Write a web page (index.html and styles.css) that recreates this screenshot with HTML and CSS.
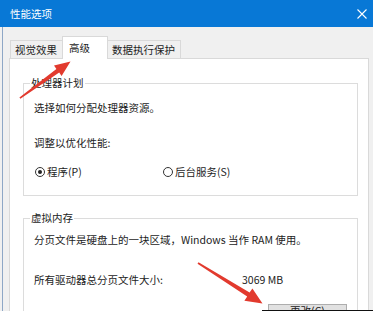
FILE: index.html
```html
<!DOCTYPE html>
<html lang="zh-CN">
<head>
<meta charset="utf-8">
<title>性能选项</title>
<link rel="stylesheet" href="styles.css">
</head>
<body>
<div class="win">
  <div class="titlebar">
    <span class="title">性能选项</span>
    <svg class="close" width="10" height="10" viewBox="0 0 10 10"><path d="M0.5 0.5 L9.5 9.5 M9.5 0.5 L0.5 9.5" stroke="#fff" stroke-width="1.1" fill="none"/></svg>
  </div>
  <div class="client">
    <div class="tabs">
      <div class="tab t1">视觉效果</div>
      <div class="tab t2 active">高级</div>
      <div class="tab t3">数据执行保护</div>
    </div>
    <div class="panel">
      <fieldset class="group g1">
        <legend>处理器计划</legend>
        <p class="line l1">选择如何分配处理器资源。</p>
        <p class="line l2">调整以优化性能:</p>
        <div class="radios">
          <label class="radio"><span class="dot checked"></span>程序(P)</label>
          <label class="radio"><span class="dot"></span>后台服务(S)</label>
        </div>
      </fieldset>
      <fieldset class="group g2">
        <legend>虚拟内存</legend>
        <p class="line">分页文件是硬盘上的一块区域，Windows 当作 RAM 使用。</p>
        <div class="sizerow"><span>所有驱动器总分页文件大小:</span><span>3069 MB</span></div>
        <div class="btnrow"><button class="btn">更改(C)</button></div>
      </fieldset>
    </div>
  </div>
  <svg class="arrows" width="373" height="311" viewBox="0 0 373 311">
    <polygon fill="#e23a2e" points="20.4,98.8 59.2,72.6 61.6,76 70.5,61.5 54,65.6 56.4,69 19.4,97.4"/>
    <polygon fill="#e23a2e" points="198.5,262.2 249.6,292.4 252.4,288.4 262.5,303.5 244.4,300.8 247.2,296.6 197.5,263.8"/>
  </svg>
  <div class="edge"></div>
</div>
</body>
</html>
```

FILE: styles.css
```css
html, body {
  margin: 0;
  padding: 0;
  background: #f0f0f0;
}

body {
  width: 373px;
  height: 311px;
  overflow: hidden;
  font-family: "Noto Sans CJK SC", "Noto Sans", sans-serif;
  font-size: 10.5px;
  line-height: 14px;
  color: #1c1c1c;
}

.win {
  position: relative;
  width: 373px;
  height: 311px;
  display: flex;
  flex-direction: column;
}

.titlebar {
  height: 27px;
  flex: none;
  background: #0878d6;
  display: flex;
  align-items: center;
  justify-content: space-between;
  padding: 0 6px 0 10px;
  color: #fff;
}

.title {
  margin-top: 1px;
}

.close {
  display: block;
  margin-top: 1px;
}

.client {
  flex: 1;
  margin-left: 2px;
  border-left: 1px solid #8ea7c6;
  padding: 9px 4px 0 6px;
}

.tabs {
  display: flex;
  align-items: flex-end;
  margin-left: 1px;
}

.tab {
  box-sizing: border-box;
  height: 18px;
  border: 1px solid #d9d9d9;
  border-bottom: none;
  background: #f0f0f0;
  display: flex;
  align-items: center;
  padding-left: 4px;
}

.t1 { width: 52px; border-right: none; }
.t2 { width: 46px; padding-left: 6px; padding-bottom: 1px; }
.t3 { width: 73px; border-left: none; }

.tab.active {
  position: relative;
  z-index: 1;
  height: 23px;
  margin-bottom: -1px;
  background: #fff;
}

.panel {
  box-sizing: border-box;
  width: 360px;
  height: 260px;
  border: 1px solid #d9d9d9;
  background: #fff;
  padding: 17px 10px 0 13px;
}

.group {
  margin: 0;
  border: 1px solid #dcdcdc;
  padding: 11px 10px 16px 10px;
  min-width: 0;
}

.group legend {
  padding: 0 1px;
  margin-left: -4px;
  line-height: 14px;
}

.line {
  margin: 0;
}

.l2 {
  margin-top: 21px;
}

.radios {
  margin-top: 15px;
  display: grid;
  grid-template-columns: 128px auto;
}

.radio {
  display: flex;
  align-items: center;
  gap: 2px;
  margin-left: 1px;
}

.dot {
  box-sizing: border-box;
  width: 10px;
  height: 10px;
  border: 1px solid #333;
  border-radius: 50%;
  display: flex;
  align-items: center;
  justify-content: center;
}

.dot.checked::after {
  content: "";
  width: 4px;
  height: 4px;
  border-radius: 50%;
  background: #222;
}

.g2 {
  margin-top: 15px;
  padding-top: 8px;
}

.sizerow {
  margin-top: 26px;
  display: grid;
  grid-template-columns: 208px auto;
}

.btnrow {
  display: flex;
  justify-content: flex-end;
  margin-top: 17px;
}

.btn {
  box-sizing: border-box;
  width: 79px;
  height: 23px;
  margin: 0;
  padding: 0;
  border: 1px solid #adadad;
  background: #e1e1e1;
  font: inherit;
  line-height: 12px;
  color: #1c1c1c;
  display: flex;
  justify-content: center;
  align-items: flex-start;
}

.arrows {
  position: absolute;
  left: 0;
  top: 0;
  pointer-events: none;
}

.edge {
  position: absolute;
  left: 262px;
  right: 0;
  bottom: 0;
  height: 1px;
  background: #111;
}
```
